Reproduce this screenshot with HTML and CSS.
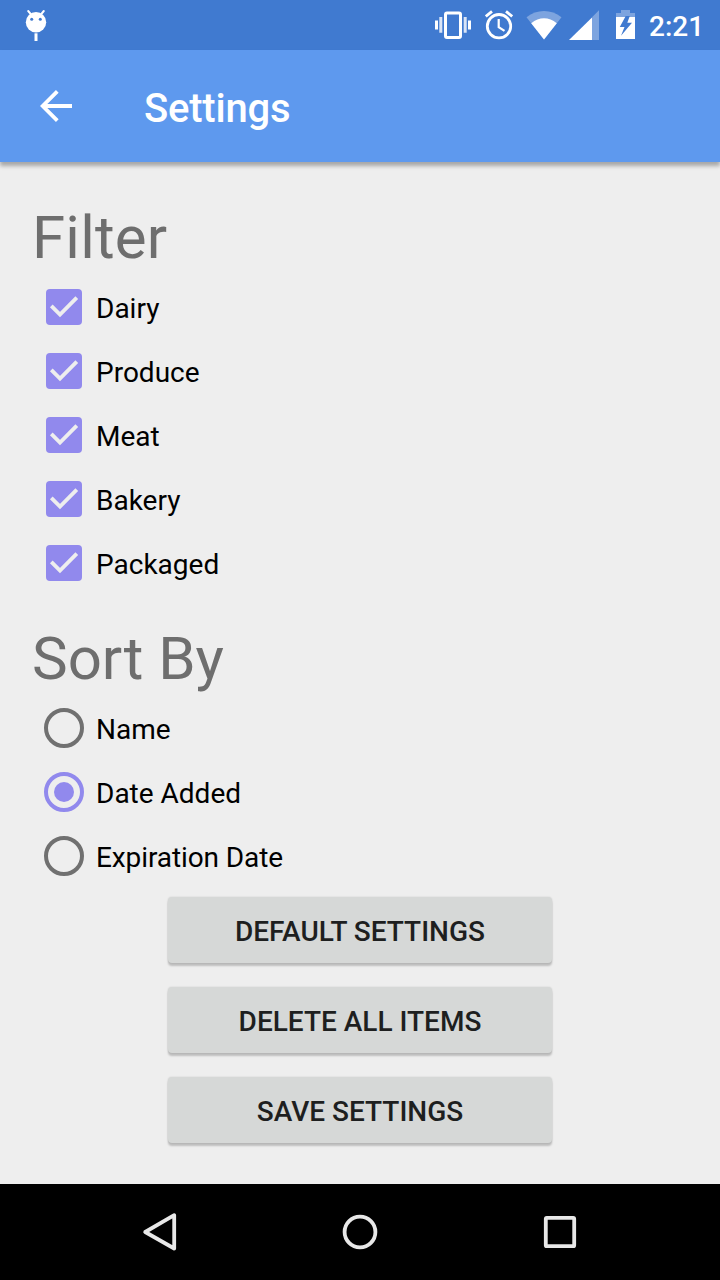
FILE: index.html
```html
<!DOCTYPE html>
<html lang="en">
<head>
<meta charset="utf-8">
<title>Settings</title>
<link rel="stylesheet" href="styles.css">
</head>
<body>
<div class="screen">
  <div class="status-bar">
    <svg class="debug-icon" width="24" height="34" viewBox="24 8 24 34">
      <path d="M28.2 11l3 3.6M43.8 11l-3 3.6" stroke="#fff" stroke-width="2" stroke-linecap="round"/>
      <circle cx="36" cy="22.2" r="10.2" fill="#fff"/>
      <circle cx="31.7" cy="19.3" r="1.5" fill="#407ad0"/>
      <circle cx="40.3" cy="19.3" r="1.5" fill="#407ad0"/>
      <path d="M34.5 33.3h3V41h-3z" fill="#fff"/>
    </svg>
    <div class="status-icons">
      <svg width="36" height="50" viewBox="435 0 36 50">
        <path d="M435 20.5h3v9h-3zM468 20.5h3v9h-3z" fill="#fff"/>
        <path d="M439.3 17h3v15.7h-3zM463.7 17h3v15.7h-3z" fill="#fff" fill-opacity=".8"/>
        <rect x="445.5" y="12.9" width="15" height="24.6" rx="1.5" fill="none" stroke="#fff" stroke-width="3"/>
      </svg>
      <svg width="28" height="50" viewBox="485 0 28 50" fill="none" stroke="#fff">
        <circle cx="499" cy="26.2" r="11.7" stroke-width="2.8"/>
        <path d="M498.7 19v8.2l5.8 3.7" stroke-width="2.2"/>
        <path d="M485.8 16.4l6.2-5.1M512.2 16.4l-6.2-5.1" stroke-width="2.8"/>
      </svg>
      <svg width="36" height="50" viewBox="526 0 36 50" fill="#fff">
        <path d="M544 39.5L526.5 17.2Q534.5 11 544 11T561.5 17.2z" fill-opacity=".32"/>
        <path d="M544 39.5L531.2 23.2Q537.3 18.3 544 18.3T556.8 23.2z"/>
      </svg>
      <svg width="31" height="50" viewBox="569 0 31 50" fill="#fff">
        <path d="M592 17.3l7-7V40h-7z" fill-opacity=".32"/>
        <path d="M569 40l23-22.5V40z"/>
      </svg>
      <svg width="20" height="50" viewBox="616 0 20 50">
        <path d="M616 17v-4h5v-3h9v3h5v4z" fill="#fff" fill-opacity=".32"/>
        <path d="M616 17h19v22h-19z" fill="#fff"/>
        <path d="M625.7 16L619.8 26.9h4.7L621 35.8 632 22.8h-4.7L629.8 16z" fill="#407ad0"/>
      </svg>
    </div>
    <span class="clock">2:21</span>
  </div>

  <header class="toolbar">
    <svg class="back-icon" width="34" height="34" viewBox="39 89 34 34" fill="none" stroke="#fff">
      <path d="M72 106H43" stroke-width="4"/>
      <path d="M57.3 91.4L42.7 106l14.6 14.6" stroke-width="3.8"/>
    </svg>
    <h1 class="title">Settings</h1>
  </header>

  <main class="content">
    <h2 class="heading heading-filter">Filter</h2>
    <div class="options">
      <div class="option"><svg class="check" width="36" height="36" viewBox="0 0 36 36"><rect width="36" height="36" rx="4"/><path d="M5.3 16.8l8.7 8.8L30.8 8.6"/></svg><span class="label">Dairy</span></div>
      <div class="option"><svg class="check" width="36" height="36" viewBox="0 0 36 36"><rect width="36" height="36" rx="4"/><path d="M5.3 16.8l8.7 8.8L30.8 8.6"/></svg><span class="label">Produce</span></div>
      <div class="option"><svg class="check" width="36" height="36" viewBox="0 0 36 36"><rect width="36" height="36" rx="4"/><path d="M5.3 16.8l8.7 8.8L30.8 8.6"/></svg><span class="label">Meat</span></div>
      <div class="option"><svg class="check" width="36" height="36" viewBox="0 0 36 36"><rect width="36" height="36" rx="4"/><path d="M5.3 16.8l8.7 8.8L30.8 8.6"/></svg><span class="label">Bakery</span></div>
      <div class="option"><svg class="check" width="36" height="36" viewBox="0 0 36 36"><rect width="36" height="36" rx="4"/><path d="M5.3 16.8l8.7 8.8L30.8 8.6"/></svg><span class="label">Packaged</span></div>
    </div>
    <h2 class="heading heading-sort">Sort By</h2>
    <div class="options">
      <div class="option"><span class="radio"></span><span class="label">Name</span></div>
      <div class="option"><span class="radio radio-on"></span><span class="label">Date Added</span></div>
      <div class="option"><span class="radio"></span><span class="label label-long">Expiration Date</span></div>
    </div>
    <div class="actions">
      <button class="button">DEFAULT SETTINGS</button>
      <button class="button">DELETE ALL ITEMS</button>
      <button class="button">SAVE SETTINGS</button>
    </div>
  </main>

  <nav class="nav-bar">
    <svg width="200" height="96" viewBox="60 1184 200 96"><path d="M174.2 1215.2v33.3L145.2 1232z"/></svg>
    <svg width="200" height="96" viewBox="260 1184 200 96"><circle cx="360" cy="1232" r="15.4"/></svg>
    <svg width="200" height="96" viewBox="460 1184 200 96"><rect x="545.8" y="1217.8" width="28.4" height="28.4" rx="1"/></svg>
  </nav>
</div>
</body>
</html>
```

FILE: styles.css
```css
* { box-sizing: border-box; }

body {
  margin: 0;
  font-family: Roboto, "Noto Sans", sans-serif;
}

svg { display: block; flex: none; }

.screen {
  display: flex;
  flex-direction: column;
  width: 720px;
  height: 1280px;
  overflow: hidden;
  background: #eee;
}

.status-bar {
  display: flex;
  align-items: center;
  height: 50px;
  padding: 0 17px 0 24px;
  background: #407ad0;
}

.status-icons {
  display: grid;
  grid-template-columns: 50px 41px 43px 47px 20px;
  margin-left: auto;
}

.clock {
  width: 54px;
  margin-left: 13px;
  padding-top: 4px;
  color: #fff;
  font-size: 28px;
  font-weight: 500;
  line-height: 48px;
  white-space: nowrap;
}

.toolbar {
  display: flex;
  align-items: center;
  flex: none;
  gap: 71px;
  height: 112px;
  padding-left: 39px;
  background: #5e99ee;
  box-shadow: 0 4px 4px rgba(0, 0, 0, .3);
}

.title {
  margin: 0;
  padding-top: 6px;
  color: #fff;
  font-size: 40px;
  font-weight: 500;
  line-height: 48px;
  letter-spacing: -.2px;
}

.content {
  flex: 1;
  padding: 40px 32px 0;
}

.heading {
  margin: 0;
  height: 73px;
  color: #6e6e6e;
  font-size: 60px;
  font-weight: 400;
  line-height: 70px;
}

.heading-filter {
  padding-top: 1px;
  letter-spacing: .2px;
}

.heading-sort {
  height: 72px;
  margin-top: 29px;
}

.option {
  display: grid;
  grid-template-columns: 64px auto;
  align-items: center;
  justify-content: start;
  height: 64px;
}

.check { justify-self: center; }
.check rect { fill: #9189ed; }
.check path { fill: none; stroke: #eee; stroke-width: 3.8; }

.radio {
  display: flex;
  align-items: center;
  justify-content: center;
  justify-self: center;
  width: 40px;
  height: 40px;
  border: 4px solid #707070;
  border-radius: 50%;
}

.radio-on { border-color: #9189ed; }

.radio-on::before {
  content: "";
  width: 20px;
  height: 20px;
  border-radius: 50%;
  background: #9189ed;
}

.label {
  padding-top: 4px;
  color: #000;
  font-size: 28px;
  line-height: 34px;
}

.label-long { letter-spacing: -.1px; }

.actions {
  display: flex;
  flex-direction: column;
  align-items: center;
  gap: 24px;
  padding-top: 9px;
}

.button {
  width: 384px;
  height: 66px;
  padding: 2px 0 0;
  border: 0;
  border-radius: 4px;
  background: #d6d8d7;
  box-shadow: 0 3px 2px rgba(0, 0, 0, .2), 0 0 2px rgba(0, 0, 0, .14);
  color: #1e1f1f;
  font-family: inherit;
  font-size: 28px;
  font-weight: 500;
}

.nav-bar {
  display: flex;
  justify-content: center;
  flex: none;
  height: 96px;
  background: #000;
  fill: none;
  stroke: #e8e8e8;
  stroke-width: 3.8;
  stroke-linejoin: round;
}
```
